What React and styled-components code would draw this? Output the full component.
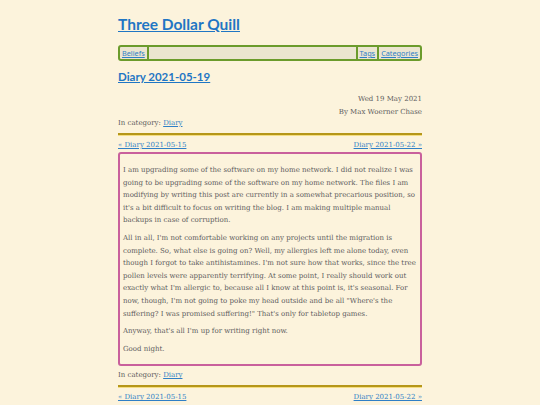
import React from "react";
import styled, { createGlobalStyle } from "styled-components";

const GlobalStyle = createGlobalStyle`
    html, body {
        margin: 0;
        padding: 0;
        background: #fcf3dc;
    }
`;

const Page = styled.div`
    width: 304px;
    margin: 0 auto;
    padding-top: 13px;
    font-family: "DejaVu Serif", serif;
    font-size: 7px;
    color: #5c5c5c;
`;

const SiteTitle = styled.h1`
    margin: 0 0 10px;
    font-family: Lato, sans-serif;
    font-size: 15.5px;
    line-height: 22px;
    font-weight: 700;

    a {
        color: #1f76c4;
    }
`;

const NavBar = styled.nav`
    display: flex;
    align-items: stretch;
    height: 12px;
    border: 2px solid #6b9b2c;
    border-radius: 3px;
    background: #ebe5d0;
    font-family: "Noto Sans", sans-serif;
    font-size: 7.3px;
    line-height: 12px;
`;

const NavItem = styled.a`
    padding: 0 2px;
    color: #2f7fc6;
    border-left: ${(p) => (p.$divided ? "2px solid #6b9b2c" : "none")};
`;

const NavFill = styled.span`
    flex: 1;
    border-left: 2px solid #6b9b2c;
`;

const PostTitle = styled.h2`
    margin: 8px 0 0;
    font-family: Lato, sans-serif;
    font-size: 11.5px;
    line-height: 16px;
    font-weight: 700;

    a {
        color: #1f76c4;
    }
`;

const Meta = styled.div`
    margin-top: 8px;
    text-align: right;
    line-height: 12.5px;
`;

const Category = styled.div`
    line-height: 11px;

    a {
        color: #2f7fc6;
    }
`;

const Rule = styled.hr`
    margin: 4px 0 3px;
    height: 0;
    border: none;
    border-top: 2px solid #b5961a;
    border-bottom: 1px solid #f4dd82;
`;

const PrevNext = styled.div`
    display: flex;
    justify-content: space-between;
    line-height: 12px;

    a {
        color: #2f7fc6;
    }
`;

const Entry = styled.div`
    margin: 1px 0 4px;
    padding: 5px 3px 4px 3px;
    border: 2px solid #c9609c;
    border-radius: 3px;

    p {
        margin: 5px 0;
        line-height: 12.6px;
    }
`;

const older = "« Diary 2021-05-15";
const newer = "Diary 2021-05-22 »";

function Pager() {
    return (
        <PrevNext>
            <a href="#">{older}</a>
            <a href="#">{newer}</a>
        </PrevNext>
    );
}

export default function App() {
    return (
        <>
            <GlobalStyle />
            <Page>
                <SiteTitle>
                    <a href="#">Three Dollar Quill</a>
                </SiteTitle>
                <NavBar>
                    <NavItem href="#">Beliefs</NavItem>
                    <NavFill />
                    <NavItem href="#" $divided>Tags</NavItem>
                    <NavItem href="#" $divided>Categories</NavItem>
                </NavBar>

                <PostTitle>
                    <a href="#">Diary 2021-05-19</a>
                </PostTitle>
                <Meta>
                    <div>Wed 19 May 2021</div>
                    <div>By Max Woerner Chase</div>
                </Meta>
                <Category>
                    In category: <a href="#">Diary</a>
                </Category>
                <Rule />
                <Pager />

                <Entry>
                    <p>
                        I am upgrading some of the software on my home network. I did not realize I was
                        going to be upgrading some of the software on my home network. The files I am
                        modifying by writing this post are currently in a somewhat precarious position, so
                        it's a bit difficult to focus on writing the blog. I am making multiple manual
                        backups in case of corruption.
                    </p>
                    <p>
                        All in all, I'm not comfortable working on any projects until the migration is
                        complete. So, what else is going on? Well, my allergies left me alone today, even
                        though I forgot to take antihistamines. I'm not sure how that works, since the tree
                        pollen levels were apparently terrifying. At some point, I really should work out
                        exactly what I'm allergic to, because all I know at this point is, it's seasonal. For
                        now, though, I'm not going to poke my head outside and be all "Where's the
                        suffering? I was promised suffering!" That's only for tabletop games.
                    </p>
                    <p>Anyway, that's all I'm up for writing right now.</p>
                    <p>Good night.</p>
                </Entry>

                <Category>
                    In category: <a href="#">Diary</a>
                </Category>
                <Rule />
                <Pager />
            </Page>
        </>
    );
}
